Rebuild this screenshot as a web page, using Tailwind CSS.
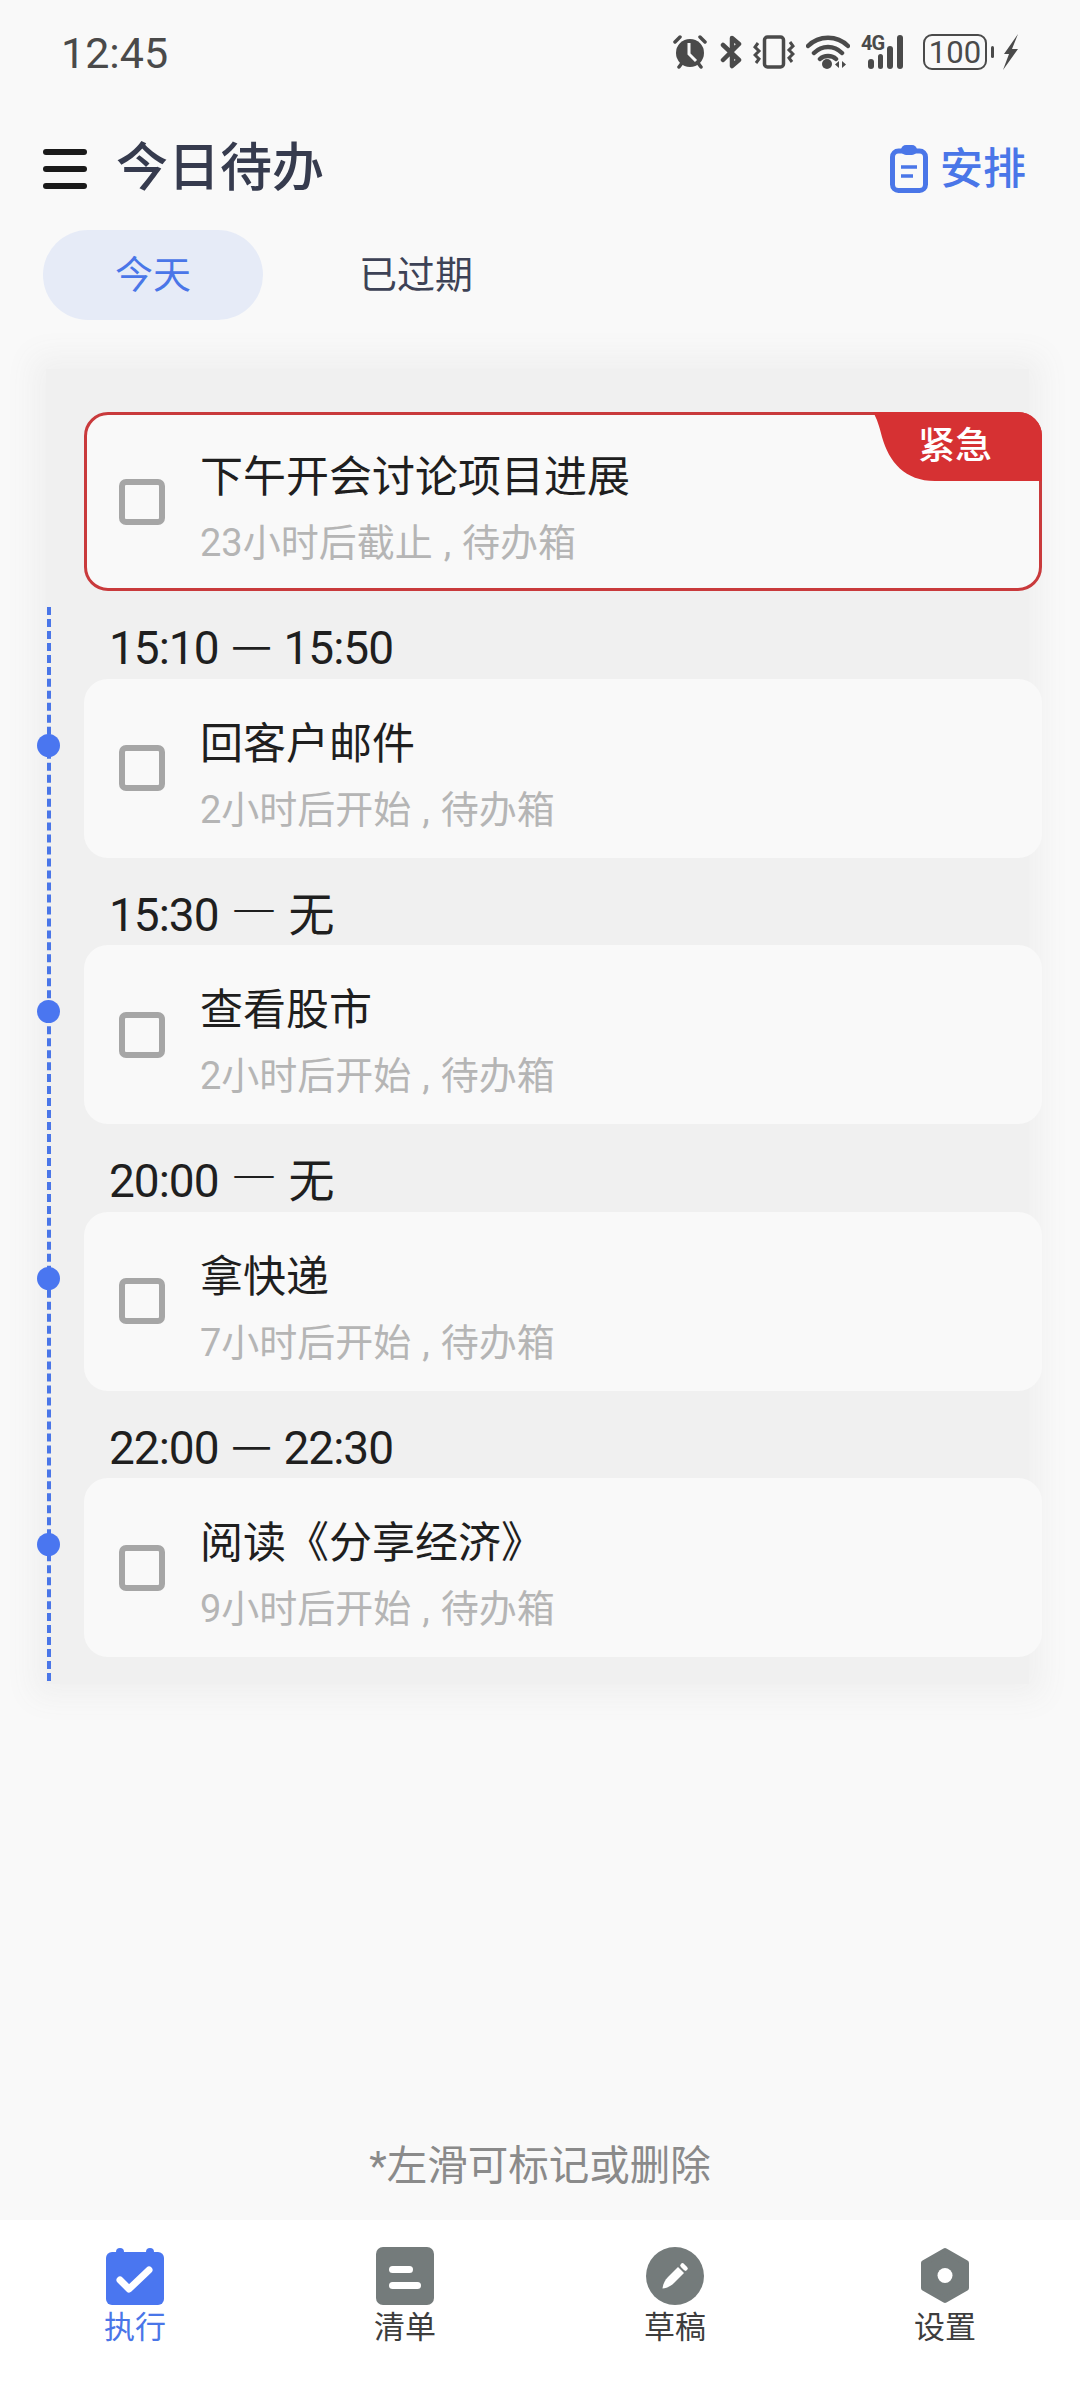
<!DOCTYPE html>
<html lang="zh-CN">
<head>
    <meta charset="UTF-8">
    <meta name="viewport" content="width=device-width, initial-scale=1.0">
    <title>今日待办</title>
    <script src="https://cdn.jsdelivr.net/npm/@tailwindcss/browser@4"></script>
</head>
<body class="bg-[#f9f9f9]">
<div class="w-[1080px] h-[2382px] flex flex-col overflow-hidden font-['Roboto','Noto_Sans_CJK_SC',sans-serif]">

    <!-- Status bar -->
    <div class="h-[107px] shrink-0 flex items-start justify-between pl-[61px] pr-[62px] pt-[31px] text-[#4a4a4a]">
        <span class="text-[43px] leading-[44px]">12:45</span>
        <div class="flex items-center h-[42px]">
            <svg class="w-[34px] h-[34px]" viewBox="0 0 34 34"><path d="M2 7 L7 2 M32 7 L27 2 M6 32 L9 28 M28 32 L25 28" stroke="#4a4a4a" stroke-width="3.500" stroke-linecap="round"/><circle cx="17" cy="18" r="14" fill="#4a4a4a"/><path d="M16 8 V19 L23 26" stroke="#f9f9f9" stroke-width="3" fill="none"/></svg>
            <svg class="w-[22px] h-[34px] ml-[13px]" viewBox="0 0 22 34"><path d="M3 10 L19 25 L12 31 V3 L19 9 L3 25" stroke="#4a4a4a" stroke-width="4.500" fill="none" stroke-linejoin="round" stroke-linecap="round"/></svg>
            <svg class="w-[42px] h-[34px] ml-[11px]" viewBox="0 0 42 34"><rect x="11.500" y="2" width="19" height="30" rx="3" stroke="#4a4a4a" stroke-width="3.500" fill="none"/><path d="M5 8 L2 12 L6 16 L2 20 L6 24 L3 28 M37 7 L40 11 L36 15 L40 19 L36 23 L39 27" stroke="#4a4a4a" stroke-width="3" fill="none"/></svg>
            <svg class="w-[44px] h-[34px] ml-[11px]" viewBox="0 0 44 34"><path d="M2 11 C13 0 31 0 42 11 M8 18 C16 10 28 10 36 18 M14 24 C18 20 26 20 30 24" stroke="#4a4a4a" stroke-width="4.500" fill="none" stroke-linecap="round"/><circle cx="21" cy="29" r="5" fill="#4a4a4a"/><path d="M33 26 V33 L29 29.500Z M36 26 V33 L40 29.500Z" fill="#4a4a4a"/></svg>
            <div class="relative w-[49px] h-[34px] ml-[11px]">
                <span class="absolute left-0 -top-[2px] text-[20px] leading-[20px] font-bold tracking-[-1px] text-[#4a4a4a]">4G</span>
                <div class="absolute left-[7px] bottom-0 flex items-end gap-[4px]">
                    <div class="w-[6px] h-[10px] rounded-full bg-[#4a4a4a]"></div>
                    <div class="w-[5px] h-[15px] rounded-full bg-[#4a4a4a]"></div>
                    <div class="w-[6px] h-[23px] rounded-full bg-[#4a4a4a]"></div>
                    <div class="w-[6px] h-[34px] rounded-full bg-[#4a4a4a]"></div>
                </div>
            </div>
            <div class="flex items-center gap-[4px] ml-[13px]">
                <div class="w-[64px] h-[36px] rounded-[9px] border-[2.5px] border-[#4a4a4a] flex items-center justify-center text-[31px] leading-none text-[#4a4a4a]">100</div>
                <div class="w-[3px] h-[12px] rounded-full bg-[#4a4a4a]"></div>
            </div>
            <svg class="w-[15px] h-[36px] ml-[9px]" viewBox="0 0 15 36"><path d="M15 0 L1 20 H6 L0 36 L15 15 H9 Z" fill="#4a4a4a"/></svg>
        </div>
    </div>

    <!-- Header -->
    <div class="h-[123px] shrink-0 flex items-center justify-between pl-[43px] pr-[54px]">
        <div class="flex items-center gap-[29px]">
            <div class="w-[44px] flex flex-col gap-[11px]">
                <div class="h-[6px] rounded-full bg-[#1a1a1a]"></div>
                <div class="h-[6px] rounded-full bg-[#1a1a1a]"></div>
                <div class="h-[6px] rounded-full bg-[#1a1a1a]"></div>
            </div>
            <span class="text-[52px] leading-[60px] font-medium text-[#363b4e]">今日待办</span>
        </div>
        <div class="flex items-center gap-[12px] text-[#4a76e8]">
            <svg class="w-[38px] h-[48px]" viewBox="0 0 38 48"><rect x="2.500" y="6" width="33" height="39.500" rx="6" fill="none" stroke="#4a76e8" stroke-width="5"/><rect x="11" y="0" width="16" height="10" rx="5" fill="#4a76e8"/><path d="M11 22 H27 M11 31 H23" stroke="#4a76e8" stroke-width="3.500"/></svg>
            <span class="text-[43px] leading-[50px] font-medium">安排</span>
        </div>
    </div>

    <!-- Tabs -->
    <div class="h-[90px] shrink-0 flex items-center pl-[43px] text-[38px]">
        <div class="w-[220px] h-[90px] rounded-full bg-[#e6ebf7] flex items-center justify-center text-[#4a76e8]">今天</div>
        <div class="ml-[96px] text-[#3d4256]">已过期</div>
    </div>

    <!-- Timeline -->
    <div class="relative isolate mt-[35px] ml-[32px] w-[1011px] h-[1343px] shrink-0 pt-[57px] pl-[52px]">
        <div class="absolute inset-[14px] -z-10 bg-[#f0f0f0] shadow-[0_0_28px_14px_#f0f0f0]"></div>
        <div class="absolute left-[15px] top-[252px] h-[1074px] border-l-[4px] border-dashed border-[#4a76e8]"></div>

        <div class="relative w-[958px] h-[179px] flex items-center rounded-[24px] border-[3px] border-[#c93a3c] bg-[#f9f9f9] pl-[32px]">
            <div class="w-[46px] h-[46px] shrink-0 rounded-[7px] border-[6px] border-[#a6a6a6]"></div>
            <div class="self-start ml-[35px] pt-[32px]">
                <div class="text-[43px] leading-[60px] text-[#1f1f1f]">下午开会讨论项目进展</div>
                <div class="mt-[6px] text-[38px] leading-[60px] [word-spacing:1.5px] text-[#b5b5b5]">23小时后截止 , 待办箱</div>
            </div>
            <div class="absolute -top-[3px] -right-[3px] w-[169px] h-[69px] flex items-center pl-[45px] text-[37px] leading-[40px] font-medium text-white">
                <svg class="absolute left-0 top-0 w-[169px] h-[69px]" viewBox="0 0 169 69"><path d="M0 0 H145 A24 24 0 0 1 169 24 V69 H62 C32 69 16 50 9 25 C6 13 4 7 0 0Z" fill="#d63133"/></svg>
                <span class="relative">紧急</span>
            </div>
        </div>

        <div class="h-[87.5px] pl-[25px] pt-[27px] text-[46px] leading-[60px] tracking-[-1px] [word-spacing:2px] text-[#1f1f1f]">15:10 <span class="relative -top-[3px] font-['Noto_Sans_CJK_SC'] leading-[0]">—</span> 15:50</div>
        <div class="relative w-[958px] h-[179px] flex items-center rounded-[24px] border-[3px] border-transparent bg-[#f9f9f9] pl-[32px]">
            <div class="absolute -left-[50px] top-[52px] w-[23px] h-[23px] rounded-full bg-[#4a76f0]"></div>
            <div class="w-[46px] h-[46px] shrink-0 rounded-[7px] border-[6px] border-[#a6a6a6]"></div>
            <div class="self-start ml-[35px] pt-[32px]">
                <div class="text-[43px] leading-[60px] text-[#1f1f1f]">回客户邮件</div>
                <div class="mt-[6px] text-[38px] leading-[60px] [word-spacing:1.5px] text-[#b5b5b5]">2小时后开始 , 待办箱</div>
            </div>
        </div>

        <div class="h-[87.5px] pl-[25px] pt-[27px] text-[46px] leading-[60px] tracking-[-1px] [word-spacing:2px] text-[#1f1f1f]">15:30 <span class="relative -top-[3px] font-['Noto_Sans_CJK_SC'] leading-[0]">—</span> 无</div>
        <div class="relative w-[958px] h-[179px] flex items-center rounded-[24px] border-[3px] border-transparent bg-[#f9f9f9] pl-[32px]">
            <div class="absolute -left-[50px] top-[52px] w-[23px] h-[23px] rounded-full bg-[#4a76f0]"></div>
            <div class="w-[46px] h-[46px] shrink-0 rounded-[7px] border-[6px] border-[#a6a6a6]"></div>
            <div class="self-start ml-[35px] pt-[32px]">
                <div class="text-[43px] leading-[60px] text-[#1f1f1f]">查看股市</div>
                <div class="mt-[6px] text-[38px] leading-[60px] [word-spacing:1.5px] text-[#b5b5b5]">2小时后开始 , 待办箱</div>
            </div>
        </div>

        <div class="h-[87.5px] pl-[25px] pt-[27px] text-[46px] leading-[60px] tracking-[-1px] [word-spacing:2px] text-[#1f1f1f]">20:00 <span class="relative -top-[3px] font-['Noto_Sans_CJK_SC'] leading-[0]">—</span> 无</div>
        <div class="relative w-[958px] h-[179px] flex items-center rounded-[24px] border-[3px] border-transparent bg-[#f9f9f9] pl-[32px]">
            <div class="absolute -left-[50px] top-[52px] w-[23px] h-[23px] rounded-full bg-[#4a76f0]"></div>
            <div class="w-[46px] h-[46px] shrink-0 rounded-[7px] border-[6px] border-[#a6a6a6]"></div>
            <div class="self-start ml-[35px] pt-[32px]">
                <div class="text-[43px] leading-[60px] text-[#1f1f1f]">拿快递</div>
                <div class="mt-[6px] text-[38px] leading-[60px] [word-spacing:1.5px] text-[#b5b5b5]">7小时后开始 , 待办箱</div>
            </div>
        </div>

        <div class="h-[87.5px] pl-[25px] pt-[27px] text-[46px] leading-[60px] tracking-[-1px] [word-spacing:2px] text-[#1f1f1f]">22:00 <span class="relative -top-[3px] font-['Noto_Sans_CJK_SC'] leading-[0]">—</span> 22:30</div>
        <div class="relative w-[958px] h-[179px] flex items-center rounded-[24px] border-[3px] border-transparent bg-[#f9f9f9] pl-[32px]">
            <div class="absolute -left-[50px] top-[52px] w-[23px] h-[23px] rounded-full bg-[#4a76f0]"></div>
            <div class="w-[46px] h-[46px] shrink-0 rounded-[7px] border-[6px] border-[#a6a6a6]"></div>
            <div class="self-start ml-[35px] pt-[32px]">
                <div class="text-[43px] leading-[60px] text-[#1f1f1f]">阅读《分享经济》</div>
                <div class="mt-[6px] text-[38px] leading-[60px] [word-spacing:1.5px] text-[#b5b5b5]">9小时后开始 , 待办箱</div>
            </div>
        </div>
    </div>

    <!-- Hint -->
    <div class="flex-1 flex items-end justify-center pb-[29px] text-[40.5px] leading-[50px] text-[#8a8a8a]">*左滑可标记或删除</div>

    <!-- Bottom nav -->
    <div class="h-[162px] shrink-0 bg-white grid grid-cols-4 pt-[27px] text-[31px] leading-[40px] text-[#3d3d3d]">
        <div class="flex flex-col items-center gap-[3px] text-[#4a76e8]">
            <svg class="w-[58px] h-[58px]" viewBox="0 0 58 58"><circle cx="14" cy="5" r="4" fill="#4a76f0"/><circle cx="44" cy="5" r="4" fill="#4a76f0"/><rect x="0" y="5" width="58" height="53" rx="6" fill="#4a76f0"/><path d="M14 33 L23 42 L43 23" stroke="#fff" stroke-width="7" fill="none" stroke-linecap="round" stroke-linejoin="round"/></svg>
            <span>执行</span>
        </div>
        <div class="flex flex-col items-center gap-[3px]">
            <svg class="w-[58px] h-[58px]" viewBox="0 0 58 58"><rect width="58" height="58" rx="7" fill="#747b7b"/><rect x="13" y="19" width="24" height="7" rx="3.500" fill="#fff"/><rect x="13" y="35" width="32" height="7" rx="3.500" fill="#fff"/></svg>
            <span>清单</span>
        </div>
        <div class="flex flex-col items-center gap-[3px]">
            <svg class="w-[58px] h-[58px]" viewBox="0 0 58 58"><circle cx="29" cy="29" r="29" fill="#747b7b"/><path d="M16.500 41.500 C17 37 19 33 22 30 L32 20 L38 26 L28 36 C25 39 21 41 16.500 41.500Z" fill="#fff"/><path d="M36.500 18.500 L39.500 21.500" stroke="#fff" stroke-width="4.500" stroke-linecap="round"/></svg>
            <span>草稿</span>
        </div>
        <div class="flex flex-col items-center gap-[3px]">
            <svg class="w-[58px] h-[58px]" viewBox="0 0 58 58"><path d="M29 4 L50 16 V41 L29 53 L8 41 V16 Z" fill="#747b7b" stroke="#747b7b" stroke-width="6" stroke-linejoin="round"/><circle cx="29" cy="28.500" r="7.500" fill="#fff"/></svg>
            <span>设置</span>
        </div>
    </div>
</div>
</body>
</html>
